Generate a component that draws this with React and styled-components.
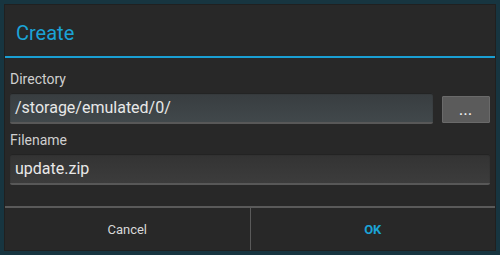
import React from "react";
import styled, { createGlobalStyle } from "styled-components";

const GlobalStyle = createGlobalStyle`
  html, body {
    margin: 0;
    padding: 0;
    background: #1a3540;
    font-family: Roboto, "Liberation Sans", sans-serif;
  }
`;

const Frame = styled.div`
  width: 500px;
  height: 255px;
  box-sizing: border-box;
  padding: 5px;
  background: #173540;
`;

const Dialog = styled.div`
  height: 100%;
  background: #282828;
  display: flex;
  flex-direction: column;
  box-shadow: 0 0 0 1px #202020;
`;

const Title = styled.div`
  height: 53px;
  box-sizing: border-box;
  padding: 16px 0 0 11px;
  color: #1ba3d6;
  font-size: 20px;
  border-bottom: 2px solid #1a9fd3;
`;

const Body = styled.div`
  flex: 1;
  padding: 7px 5px 0 5px;
  display: flex;
  flex-direction: column;
`;

const Label = styled.div`
  color: #cfcfcf;
  font-size: 14px;
  height: 28px;
  line-height: 28px;
`;

const Row = styled.div`
  display: flex;
  align-items: center;
  gap: 9px;
  margin-bottom: 2px;
`;

const Field = styled.div`
  flex: 1;
  height: 31px;
  box-sizing: border-box;
  padding-left: 5px;
  display: flex;
  align-items: center;
  color: #e8e8e8;
  font-size: 16px;
  background: ${(p) =>
    p.$active
      ? "linear-gradient(#383d40, #41484b)"
      : "linear-gradient(#333333, #3c3c3c)"};
  border-radius: 2px;
  border-bottom: 2px solid #585858;
  box-shadow: inset 0 1px 1px #222;
`;

const Browse = styled.button`
  width: 48px;
  height: 27px;
  margin-top: 1px;
  background: #5b5b5b;
  border: 1px solid #6a6a6a;
  border-radius: 1px;
  color: #f0f0f0;
  font-size: 12px;
  font-weight: 700;
  letter-spacing: 1px;
  padding: 0 0 4px 0;
  display: flex;
  align-items: flex-end;
  justify-content: center;
  font-family: inherit;
`;

const Footer = styled.div`
  height: 42px;
  display: flex;
  border-top: 2px solid #5a5a5a;
`;

const Action = styled.div`
  flex: 1;
  display: flex;
  align-items: center;
  justify-content: center;
  font-size: 13px;
  color: ${(p) => (p.$primary ? "#1ba3d6" : "#d8d8d8")};
  font-weight: ${(p) => (p.$primary ? 700 : 400)};
  & + & {
    border-left: 1px solid #5a5a5a;
  }
`;

export default function App() {
  return (
    <>
      <GlobalStyle />
      <Frame>
        <Dialog>
          <Title>Create</Title>
          <Body>
            <Label>Directory</Label>
            <Row>
              <Field $active>/storage/emulated/0/</Field>
              <Browse>...</Browse>
            </Row>
            <Label>Filename</Label>
            <Row>
              <Field>update.zip</Field>
            </Row>
          </Body>
          <Footer>
            <Action>Cancel</Action>
            <Action $primary>OK</Action>
          </Footer>
        </Dialog>
      </Frame>
    </>
  );
}
